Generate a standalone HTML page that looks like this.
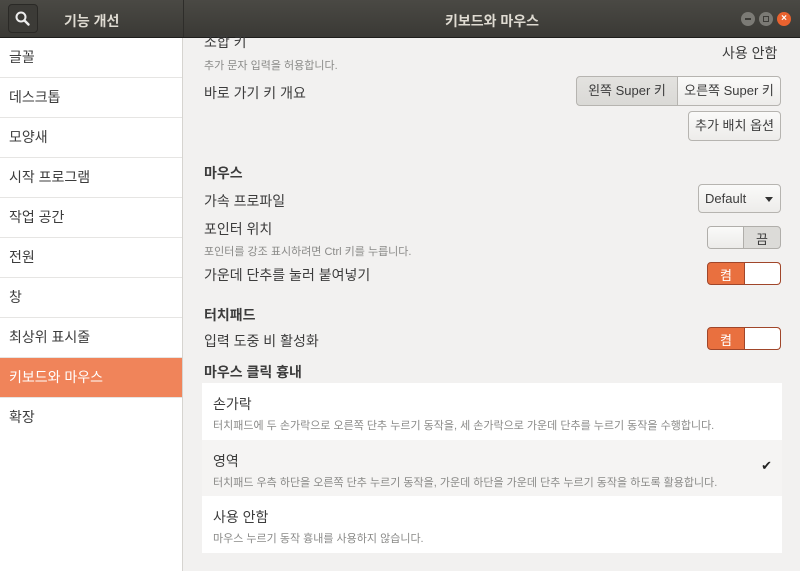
<!DOCTYPE html>
<html><head><meta charset="utf-8"><style>
*{margin:0;padding:0;box-sizing:border-box}
body{width:800px;height:571px;overflow:hidden;font-family:"Liberation Sans","Noto Sans CJK KR",sans-serif;font-size:13px;color:#3c3c3c;background:#f2f1f0;position:relative}
.hdr{position:absolute;left:0;top:0;width:800px;height:38px;background:linear-gradient(#4a4944,#3a3935);border-bottom:1px solid #1e1e1c}
.hdr .sep{position:absolute;left:183px;top:0;width:1px;height:37px;background:#2e2d2a}
.srch{position:absolute;left:8px;top:4px;width:30px;height:29px;border:1px solid #2a2926;border-radius:4px;background:#3c3b37}
.t1{position:absolute;left:64px;top:11px;color:#dfdbd2;font-weight:bold;font-size:14px}
.t2{position:absolute;width:800px;text-align:center;top:11px;color:#dfdbd2;font-weight:bold;font-size:14px}
.wb{position:absolute;top:12px;width:14px;height:14px;border-radius:50%;background:#7b7a75}
.side{position:absolute;left:0;top:38px;width:183px;height:533px;background:#fff;border-right:1px solid #d6d4d0}
.it{height:40px;line-height:39px;padding-left:9px;font-size:14px;border-bottom:1px solid #e6e5e3;color:#3c3c3c}
.it.sel{background:#f0845a;color:#fff}
.a{position:absolute;white-space:nowrap}
.lbl{font-size:14px;color:#3c3c3c}
.sub{font-size:11px;color:#8a8a88}
.h{font-size:14px;font-weight:bold;color:#3c3c3c}
.btn{position:absolute;border:1px solid #b6b4b0;border-radius:4px;background:linear-gradient(#fafaf9,#edecea);font-size:13px;text-align:center;color:#3c3c3c;white-space:nowrap}
.sw{position:absolute;width:74px;height:23px;border-radius:4px;overflow:hidden}
.list{position:absolute;left:202px;top:383px;width:580px;height:170px}
.row{height:56.5px;background:#fff;padding:11px 0 0 11px;position:relative}
.row .t{font-size:14px;color:#3c3c3c}
.row .d{font-size:11px;color:#8a8a88;margin-top:3px}
</style></head><body>
<div class="hdr">
<div class="srch"><svg width="28" height="27" viewBox="0 0 28 27"><circle cx="12" cy="12" r="4.5" fill="none" stroke="#eee" stroke-width="2"/><line x1="15.5" y1="15.5" x2="19.5" y2="19.5" stroke="#eee" stroke-width="2.4" stroke-linecap="round"/></svg></div>
<div class="t1">기능 개선</div>
<div class="sep"></div>
<div class="t2" style="left:92px">키보드와 마우스</div>
<div class="wb" style="left:741px"><div style="position:absolute;left:4px;top:6px;width:6px;height:1.5px;background:#3c3b37"></div></div>
<div class="wb" style="left:759px"><div style="position:absolute;left:4px;top:4px;width:6px;height:6px;border:1px solid #3c3b37"></div></div>
<div class="wb" style="left:777px;background:#e9622f;color:#fff;font-size:10px;line-height:14px;text-align:center;font-weight:bold">×</div>
</div>
<div class="side">
<div class="it">글꼴</div><div class="it">데스크톱</div><div class="it">모양새</div><div class="it">시작 프로그램</div><div class="it">작업 공간</div><div class="it">전원</div><div class="it">창</div><div class="it">최상위 표시줄</div><div class="it sel">키보드와 마우스</div><div class="it" style="border:none">확장</div>
</div>
<div class="a lbl" style="left:204px;top:32px">조합 키</div>
<div class="a sub" style="left:204px;top:57px">추가 문자 입력을 허용합니다.</div>
<div class="a lbl" style="left:722px;top:43px">사용 안함</div>
<div class="a lbl" style="left:204px;top:83px">바로 가기 키 개요</div>
<div class="btn" style="left:576px;top:76px;width:102px;height:30px;line-height:28px;border-radius:4px 0 0 4px;background:linear-gradient(#e3e2df,#dad9d6)">왼쪽 Super 키</div>
<div class="btn" style="left:677px;top:76px;width:104px;height:30px;line-height:28px;border-radius:0 4px 4px 0">오른쪽 Super 키</div>
<div class="btn" style="left:688px;top:111px;width:93px;height:30px;line-height:28px">추가 배치 옵션</div>
<div class="a h" style="left:204px;top:163px">마우스</div>
<div class="a lbl" style="left:204px;top:191px">가속 프로파일</div>
<div class="btn" style="left:698px;top:184px;width:83px;height:29px;line-height:27px;text-align:left;padding-left:6px">Default<span style="position:absolute;right:7px;top:12px;border:4px solid transparent;border-top:5px solid #333;border-bottom:none"></span></div>
<div class="a lbl" style="left:204px;top:219px">포인터 위치</div>
<div class="a sub" style="left:204px;top:243px">포인터를 강조 표시하려면 Ctrl 키를 누릅니다.</div>
<div class="sw" style="left:707px;top:226px;background:#dcdbd8;border:1px solid #b0aeaa"><div style="position:absolute;left:0;top:0;width:36px;height:21px;background:linear-gradient(#fafaf9,#ecebe9);border-right:1px solid #b0aeaa"></div><span style="position:absolute;left:48px;top:2px;font-size:13px">끔</span></div>
<div class="a lbl" style="left:204px;top:265px">가운데 단추를 눌러 붙여넣기</div>
<div class="sw" style="left:707px;top:262px;background:#e9703f;border:1px solid #a0462a"><span style="position:absolute;left:12px;top:2px;font-size:13px;color:#fff">켬</span><div style="position:absolute;left:36px;top:0;width:36px;height:21px;background:#fff;border-left:1px solid #a0462a;border-radius:0 3px 3px 0"></div></div>
<div class="a h" style="left:204px;top:305px">터치패드</div>
<div class="a lbl" style="left:204px;top:331px">입력 도중 비 활성화</div>
<div class="sw" style="left:707px;top:327px;background:#e9703f;border:1px solid #a0462a"><span style="position:absolute;left:12px;top:2px;font-size:13px;color:#fff">켬</span><div style="position:absolute;left:36px;top:0;width:36px;height:21px;background:#fff;border-left:1px solid #a0462a;border-radius:0 3px 3px 0"></div></div>
<div class="a h" style="left:204px;top:362px">마우스 클릭 흉내</div>
<div class="list">
<div class="row"><div class="t">손가락</div><div class="d">터치패드에 두 손가락으로 오른쪽 단추 누르기 동작을, 세 손가락으로 가운데 단추를 누르기 동작을 수행합니다.</div></div>
<div class="row" style="background:#f5f4f3"><div class="t">영역</div><div class="d">터치패드 우측 하단을 오른쪽 단추 누르기 동작을, 가운데 하단을 가운데 단추 누르기 동작을 하도록 활용합니다.</div><span style="position:absolute;right:10px;top:18px;font-size:13px;color:#222">✔</span></div>
<div class="row"><div class="t">사용 안함</div><div class="d">마우스 누르기 동작 흉내를 사용하지 않습니다.</div></div>
</div>
</body></html>
